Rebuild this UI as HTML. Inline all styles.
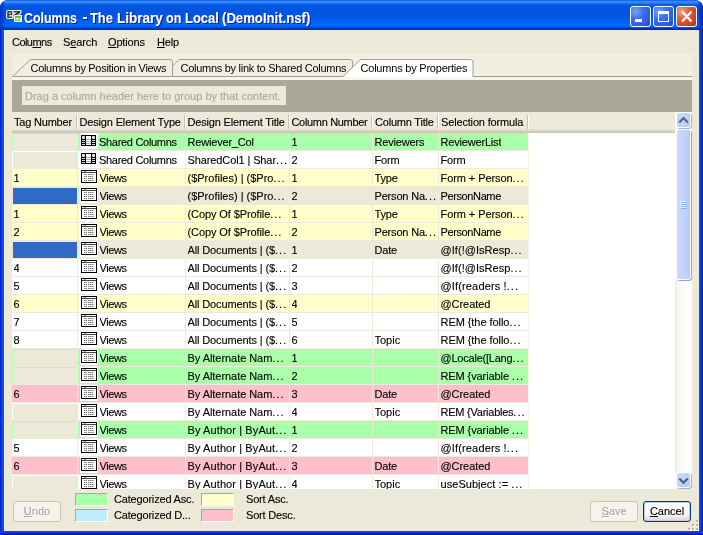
<!DOCTYPE html>
<html><head><meta charset="utf-8"><title>Columns</title>
<style>
*{box-sizing:border-box;margin:0;padding:0}
html,body{width:703px;height:535px;overflow:hidden;background:#fff}
body{font-family:"Liberation Sans",sans-serif;font-size:11px;color:#000;position:relative;-webkit-text-stroke:0.12px}
.abs{position:absolute}
#win{will-change:transform;position:absolute;left:0;top:0;width:703px;height:535px;border-radius:8px 8px 0 0;overflow:hidden;
 background:linear-gradient(to right,#0022C8 0,#0A3CE4 1.5px,#0C48EC 2.5px,#1256F0 4px,#1256F0 699px,#0A48E4 700px,#0632D0 701.5px,#001DA0 703px)}
#bbot{position:absolute;left:0;top:531px;width:703px;height:4px;background:linear-gradient(to bottom,#0C44EA 0,#0A3CE4 1.5px,#0428C0 2.5px,#00138C 4px)}
#tbar{position:absolute;left:0;top:0;width:703px;height:30px;border-radius:8px 8px 0 0;
 background:linear-gradient(to bottom,#0A4FD8 0,#2E82FA 1px,#3C8EFF 2px,#2A80FA 3px,#0E68F0 4px,#0358E6 5.5px,#0054E0 8px,#0054E2 16px,#005BEE 19px,#0065FC 22px,#0066FF 26px,#0058F0 27px,#0043D0 28px,#0030B8 29px,#002AA8 30px)}
#tbarL{position:absolute;left:0;top:0;width:6px;height:30px;border-radius:8px 0 0 0;background:linear-gradient(to right,#0034C8,rgba(0,52,200,0))}
#tbarR{position:absolute;left:697px;top:0;width:6px;height:30px;border-radius:0 8px 0 0;background:linear-gradient(to left,#0027A8,rgba(0,39,168,0))}
.tw{position:absolute;top:10px;transform-origin:0 0;font-weight:bold;font-size:14px;line-height:16px;color:#fff;text-shadow:1px 1px 0 #0A1883;white-space:nowrap}
#client{position:absolute;left:4px;top:30px;width:695px;height:501px;background:#ECE9D8}
.menu{position:absolute;top:36px;font-size:11px;white-space:nowrap;line-height:13px}
u{text-decoration:underline;text-underline-offset:1px;text-decoration-thickness:1px}
.tbtn{position:absolute;top:6px;width:21px;height:21px;border:1px solid #fff;border-radius:3px;background:radial-gradient(circle at 25% 25%,#7BA2FA 0%,#3F72F0 35%,#2B5BE0 75%,#2048C8 100%)}
#bclose{background:radial-gradient(circle at 25% 25%,#F2A98E 0%,#E2603C 35%,#D0411C 75%,#B02C0A 100%)}
#tabarea{position:absolute;left:12px;top:54px}
#grp{position:absolute;left:12px;top:80px;width:680px;height:32px;background:#ACA899}
#grpbox{position:absolute;left:22px;top:86px;width:264px;height:19px;background:#ECE9D8;color:#ACA899;font-size:11px;line-height:21px;padding-left:3px;white-space:nowrap;overflow:hidden}
#hdr{position:absolute;left:12px;top:112px;width:663px;height:21px;background:linear-gradient(to bottom,#EBEADB 0,#EBEADB 17px,#E2DECD 18px,#D6D2C2 19px,#CBC7B8 20px,#CBC7B8 21px)}
.h{position:absolute;top:113px;height:18px;line-height:19px;font-size:11px;white-space:nowrap}
.hs{position:absolute;top:115px;width:2px;height:14px;border-left:1px solid #C5C2B2;border-right:1px solid #fff}
#grid{position:absolute;left:12px;top:133px;width:663px;height:356px;background:#fff;overflow:hidden}
.row{position:absolute;left:12px;width:516px;height:18px;border-bottom:1px solid #EDEADA}
.c{position:absolute;top:0;height:18px;line-height:18px;white-space:nowrap;overflow:hidden;font-size:11px;letter-spacing:-0.18px}
.c0{left:1.5px}.c1{left:87px;letter-spacing:-0.3px}.c2{left:175.5px}.c3{left:279.5px}.c4{left:362.5px}.c5{left:428.5px}
.el{letter-spacing:1px}
.tag{position:absolute;left:1px;top:1px;width:64px;height:16px}
.tag.e{background:#ECE9D8}
.tag.b{background:#316AC5}
.icw{position:absolute;left:68px;top:0px;width:18px;height:16px;background:#fff}
.ic{position:absolute;left:69px}
.vl{position:absolute;top:133px;width:1px;height:356px;background:#EDEADA}
#sb{position:absolute;left:675px;top:112px;width:17px;height:377px;background:linear-gradient(to right,#EFEDE4 0,#F6F5EF 3px,#FBFBF8 8px,#FFFFFF 14px)}
.sbtn{position:absolute;left:677px;width:13px;height:14px;border-radius:2px;background:linear-gradient(135deg,#CADAFD 0,#C2D3FC 50%,#B4C8F7 100%);box-shadow:0 0 0 1px #fff,-1px 0 0 1px #fff,1px 1px 0 1px #9DB4E6}
#thumb{position:absolute;left:677px;top:130px;width:13px;height:149px;border-radius:2px;background:linear-gradient(to right,#C9D8FC 0,#C3D3FC 50%,#B6C9F8 100%);box-shadow:0 0 0 1px #fff,-1px 0 0 1px #fff,1px 1px 0 1px #8DA6E2}
.btn{position:absolute;top:501px;height:21px;border:1px solid #C9C7BA;border-radius:3px;background:#F5F4EA;color:#ACA899;font-size:11px;text-align:center;line-height:19px;text-shadow:1px 1px 0 #fff}
.lg{position:absolute;width:33px;height:13px;border:1px solid;border-color:#ACA899 #fff #fff #ACA899}
.lt{position:absolute;font-size:11px;white-space:nowrap;line-height:13px;letter-spacing:-0.18px}
</style></head><body>
<svg width="0" height="0" style="position:absolute"><defs><symbol id="is" viewBox="0 0 15 11"><rect width="15" height="11" fill="#000"/><rect x="1" y="1" width="3" height="3" fill="#B4B4B4"/><rect x="11" y="1" width="3" height="3" fill="#B4B4B4"/><rect x="2" y="1" width="1" height="3" fill="#E4E4E4"/><rect x="12" y="1" width="1" height="3" fill="#E4E4E4"/><rect x="1" y="2" width="3" height="1" fill="#E4E4E4"/><rect x="11" y="2" width="3" height="1" fill="#E4E4E4"/><rect x="5" y="1" width="5" height="9" fill="#fff"/><rect x="5" y="4" width="5" height="1" fill="#B0B0B0"/><rect x="5" y="6" width="5" height="1" fill="#B0B0B0"/><rect x="5" y="8" width="5" height="1" fill="#B0B0B0"/><rect x="1" y="5" width="3" height="1" fill="#D8D8D8"/><rect x="1" y="7" width="3" height="1" fill="#D8D8D8"/><rect x="1" y="9" width="3" height="1" fill="#D8D8D8"/><rect x="11" y="5" width="3" height="1" fill="#D8D8D8"/><rect x="11" y="7" width="3" height="1" fill="#D8D8D8"/><rect x="11" y="9" width="3" height="1" fill="#D8D8D8"/></symbol><symbol id="iv" viewBox="0 0 16 13"><rect width="16" height="13" fill="#000"/><rect x="1" y="1" width="14" height="11" fill="#fff"/><rect x="1" y="2" width="14" height="1" fill="#444"/><rect x="3" y="1" width="2" height="1" fill="#999"/><g fill="#7A7A7A"><rect x="3" y="4" width="1" height="1"/><rect x="5" y="4" width="1" height="1"/><rect x="7" y="4" width="1" height="1"/><rect x="9" y="4" width="1" height="1"/><rect x="11" y="4" width="1" height="1"/><rect x="3" y="6" width="1" height="1"/><rect x="5" y="6" width="1" height="1"/><rect x="7" y="6" width="1" height="1"/><rect x="9" y="6" width="1" height="1"/><rect x="11" y="6" width="1" height="1"/><rect x="3" y="8" width="1" height="1"/><rect x="5" y="8" width="1" height="1"/><rect x="7" y="8" width="1" height="1"/><rect x="9" y="8" width="1" height="1"/><rect x="11" y="8" width="1" height="1"/><rect x="3" y="10" width="1" height="1"/><rect x="5" y="10" width="1" height="1"/><rect x="7" y="10" width="1" height="1"/><rect x="9" y="10" width="1" height="1"/><rect x="11" y="10" width="1" height="1"/></g><g fill="#B8B8B8"><rect x="4" y="4" width="1" height="1"/><rect x="8" y="4" width="1" height="1"/><rect x="10" y="4" width="1" height="1"/><rect x="12" y="4" width="1" height="1"/><rect x="4" y="6" width="1" height="1"/><rect x="8" y="6" width="1" height="1"/><rect x="10" y="6" width="1" height="1"/><rect x="4" y="8" width="1" height="1"/><rect x="8" y="8" width="1" height="1"/><rect x="10" y="8" width="1" height="1"/><rect x="12" y="8" width="1" height="1"/><rect x="4" y="10" width="1" height="1"/><rect x="8" y="10" width="1" height="1"/><rect x="10" y="10" width="1" height="1"/><rect x="12" y="10" width="1" height="1"/></g></symbol></defs></svg>
<div id="win">
<div id="tbar"></div><div id="tbarL"></div><div id="tbarR"></div>
<svg class="abs" style="left:5px;top:9px" width="18" height="14" viewBox="0 0 18 14">
<g stroke="#fff" stroke-width="2" stroke-linejoin="round" fill="#3E3E3E" paint-order="stroke"><path fill-rule="evenodd" d="M2.2 2.8Q2.2 2 3 2H6.7Q7.5 2 7.5 2.8V6.2H3.9V7.4H7.5V9H3Q2.2 9 2.2 8.2ZM3.9 3.5V4.8H5.8V3.5Z"/><path d="M8.5 2H15.5V3.6L11 7.5H8.3V6.1L12.1 3.6H8.5Z"/></g>
<rect x="9.5" y="6.5" width="7" height="6" fill="#6AB43E" stroke="#fff"/>
<path d="M11 8.5v3M12.5 8.5v3M11 10h1.5M14 8.5v3M15.5 8.5v3M14 10h1.5" stroke="#fff" stroke-width=".8" fill="none"/>
</svg>
<div class="tw" style="left:24.2px;transform:scaleX(0.885)">Columns</div><div class="tw" style="left:90.1px;transform:scaleX(0.917)">The</div><div class="tw" style="left:117px;transform:scaleX(0.967)">Library</div><div class="tw" style="left:166.1px;transform:scaleX(0.894)">on</div><div class="tw" style="left:184.5px;transform:scaleX(0.925)">Local</div><div class="tw" style="left:222px;transform:scaleX(0.939)">(DemoInit.nsf)</div><div class="abs" style="left:83px;top:17px;width:4px;height:2px;background:#fff;box-shadow:1px 1px 0 #0A1883"></div>
<div class="tbtn" style="left:630px"><div class="abs" style="left:4px;top:12px;width:7px;height:3px;background:#fff"></div></div>
<div class="tbtn" style="left:653px"><div class="abs" style="left:4px;top:4px;width:11px;height:11px;border:1px solid #fff;border-top-width:3px"></div></div>
<div class="tbtn" id="bclose" style="left:676px"><svg class="abs" style="left:0;top:0" width="19" height="19"><path d="M5 4.5L14.5 14.5M14.5 4.5L5 14.5" stroke="#fff" stroke-width="2.2"/></svg></div>
<div id="client"></div><div class="abs" style="left:4px;top:30px;width:1px;height:501px;background:#F6F1DF"></div>
<div class="menu" style="left:12px;letter-spacing:-0.55px">Colu<u>m</u>ns</div>
<div class="menu" style="left:63px;letter-spacing:-0.1px">S<u>e</u>arch</div>
<div class="menu" style="left:108px;letter-spacing:-0.15px"><u>O</u>ptions</div>
<div class="menu" style="left:157px;letter-spacing:-0.2px"><u>H</u>elp</div>
<svg id="tabarea" width="680" height="26" viewBox="0 0 680 26">
<rect x="0" y="0" width="680" height="26" fill="#F1EFE2"/>
<rect x="0" y="23" width="680" height="3" fill="#F7F6EE"/>
<path d="M0.5 22.5L18.5 5.5H158Q160.5 5.5 160.5 8V22.5" fill="#F1EFE2" stroke="#A19E8E"/>
<path d="M160.5 12L167 5.5H338Q340.5 5.5 340.5 8V13" fill="none" stroke="#A19E8E"/>
<path d="M331 23L348.5 5.5H458.5Q461 5.5 461 8V23Z" fill="#fff" stroke="none"/>
<path d="M331 22.5L348.5 5.5H458.5Q461 5.5 461 8V22.5" fill="none" stroke="#A19E8E"/>
<path d="M0 22.5H331M461 22.5H680" stroke="#A19E8E"/>
<g font-family="Liberation Sans" font-size="11" fill="#000">
<text x="18.5" y="17.5" textLength="136" lengthAdjust="spacing">Columns by Position in Views</text>
<text x="168.5" y="17.5" textLength="166" lengthAdjust="spacing">Columns by link to Shared Columns</text>
<text x="348.5" y="17.5" textLength="107" lengthAdjust="spacing">Columns by Properties</text>
</g>
</svg>
<div id="grp"></div>
<div id="grpbox">Drag a column header here to group by that content.</div>
<div id="hdr"></div>
<div class="h" style="left:14px;letter-spacing:-0.2px">Tag Number</div>
<div class="h" style="left:79.5px;letter-spacing:-0.16px">Design Element Type</div>
<div class="h" style="left:187.5px;letter-spacing:-0.18px">Design Element Title</div>
<div class="h" style="left:291.5px;letter-spacing:-0.33px">Column Number</div>
<div class="h" style="left:375px;letter-spacing:-0.2px">Column Title</div>
<div class="h" style="left:441px;letter-spacing:-0.16px">Selection formula</div>
<div class="hs" style="left:76px"></div><div class="hs" style="left:184px"></div><div class="hs" style="left:288px"></div><div class="hs" style="left:371px"></div><div class="hs" style="left:437px"></div><div class="hs" style="left:527px"></div>
<div id="grid"></div>
<div class="abs" style="left:0;top:133px;width:703px;height:356px;overflow:hidden"><div class="abs" style="left:0;top:-133px">
<div class="row" style="top:133px;background:#AAFFAA">
<div class="tag e"></div>
<div class="icw"></div><svg class="ic" style="top:2px" width="15" height="11" shape-rendering="crispEdges"><use href="#is"/></svg>
<div class="c c1">Shared Columns</div>
<div class="c c2">Rewiever_Col</div><div class="c c3">1</div><div class="c c4">Reviewers</div><div class="c c5">ReviewerList</div>
</div>
<div class="row" style="top:151px;background:#FFFFFF">
<div class="tag e"></div>
<div class="icw"></div><svg class="ic" style="top:2px" width="15" height="11" shape-rendering="crispEdges"><use href="#is"/></svg>
<div class="c c1">Shared Columns</div>
<div class="c c2" style="letter-spacing:-0.11px">SharedCol1 | Shar<span class="el">...</span></div><div class="c c3">2</div><div class="c c4">Form</div><div class="c c5">Form</div>
</div>
<div class="row" style="top:169px;background:#FFFFCC">
<div class="c c0">1</div>
<div class="icw"></div><svg class="ic" style="top:1px" width="16" height="13" shape-rendering="crispEdges"><use href="#iv"/></svg>
<div class="c c1" style="left:87.5px;letter-spacing:-0.4px">Views</div>
<div class="c c2" style="letter-spacing:0.0px">($Profiles) | ($Pro<span class="el">...</span></div><div class="c c3">1</div><div class="c c4">Type</div><div class="c c5" style="letter-spacing:-0.08px">Form + Person<span class="el">...</span></div>
</div>
<div class="row" style="top:187px;background:#ECE9D8">
<div class="tag b"></div>
<div class="icw"></div><svg class="ic" style="top:1px" width="16" height="13" shape-rendering="crispEdges"><use href="#iv"/></svg>
<div class="c c1" style="left:87.5px;letter-spacing:-0.4px">Views</div>
<div class="c c2" style="letter-spacing:0.0px">($Profiles) | ($Pro<span class="el">...</span></div><div class="c c3">2</div><div class="c c4">Person Na<span class="el">...</span></div><div class="c c5" style="letter-spacing:-0.38px">PersonName</div>
</div>
<div class="row" style="top:205px;background:#FFFFCC">
<div class="c c0">1</div>
<div class="icw"></div><svg class="ic" style="top:1px" width="16" height="13" shape-rendering="crispEdges"><use href="#iv"/></svg>
<div class="c c1" style="left:87.5px;letter-spacing:-0.4px">Views</div>
<div class="c c2" style="letter-spacing:-0.1px">(Copy Of $Profile<span class="el">...</span></div><div class="c c3">1</div><div class="c c4">Type</div><div class="c c5" style="letter-spacing:-0.08px">Form + Person<span class="el">...</span></div>
</div>
<div class="row" style="top:223px;background:#FFFFCC">
<div class="c c0">2</div>
<div class="icw"></div><svg class="ic" style="top:1px" width="16" height="13" shape-rendering="crispEdges"><use href="#iv"/></svg>
<div class="c c1" style="left:87.5px;letter-spacing:-0.4px">Views</div>
<div class="c c2" style="letter-spacing:-0.1px">(Copy Of $Profile<span class="el">...</span></div><div class="c c3">2</div><div class="c c4">Person Na<span class="el">...</span></div><div class="c c5" style="letter-spacing:-0.38px">PersonName</div>
</div>
<div class="row" style="top:241px;background:#ECE9D8">
<div class="tag b"></div>
<div class="icw"></div><svg class="ic" style="top:1px" width="16" height="13" shape-rendering="crispEdges"><use href="#iv"/></svg>
<div class="c c1" style="left:87.5px;letter-spacing:-0.4px">Views</div>
<div class="c c2" style="letter-spacing:-0.12px">All Documents | ($<span class="el">...</span></div><div class="c c3">1</div><div class="c c4">Date</div><div class="c c5" style="letter-spacing:0.05px">@If(!@IsResp<span class="el">...</span></div>
</div>
<div class="row" style="top:259px;background:#FFFFFF">
<div class="c c0">4</div>
<div class="icw"></div><svg class="ic" style="top:1px" width="16" height="13" shape-rendering="crispEdges"><use href="#iv"/></svg>
<div class="c c1" style="left:87.5px;letter-spacing:-0.4px">Views</div>
<div class="c c2" style="letter-spacing:-0.12px">All Documents | ($<span class="el">...</span></div><div class="c c3">2</div><div class="c c4"></div><div class="c c5" style="letter-spacing:0.05px">@If(!@IsResp<span class="el">...</span></div>
</div>
<div class="row" style="top:277px;background:#FFFFFF">
<div class="c c0">5</div>
<div class="icw"></div><svg class="ic" style="top:1px" width="16" height="13" shape-rendering="crispEdges"><use href="#iv"/></svg>
<div class="c c1" style="left:87.5px;letter-spacing:-0.4px">Views</div>
<div class="c c2" style="letter-spacing:-0.12px">All Documents | ($<span class="el">...</span></div><div class="c c3">3</div><div class="c c4"></div><div class="c c5" style="letter-spacing:0.15px">@If(readers !<span class="el">...</span></div>
</div>
<div class="row" style="top:295px;background:#FFFFCC">
<div class="c c0">6</div>
<div class="icw"></div><svg class="ic" style="top:1px" width="16" height="13" shape-rendering="crispEdges"><use href="#iv"/></svg>
<div class="c c1" style="left:87.5px;letter-spacing:-0.4px">Views</div>
<div class="c c2" style="letter-spacing:-0.12px">All Documents | ($<span class="el">...</span></div><div class="c c3">4</div><div class="c c4"></div><div class="c c5" style="letter-spacing:-0.05px">@Created</div>
</div>
<div class="row" style="top:313px;background:#FFFFFF">
<div class="c c0">7</div>
<div class="icw"></div><svg class="ic" style="top:1px" width="16" height="13" shape-rendering="crispEdges"><use href="#iv"/></svg>
<div class="c c1" style="left:87.5px;letter-spacing:-0.4px">Views</div>
<div class="c c2" style="letter-spacing:-0.12px">All Documents | ($<span class="el">...</span></div><div class="c c3">5</div><div class="c c4"></div><div class="c c5" style="letter-spacing:-0.06px">REM {the follo<span class="el">...</span></div>
</div>
<div class="row" style="top:331px;background:#FFFFFF">
<div class="c c0">8</div>
<div class="icw"></div><svg class="ic" style="top:1px" width="16" height="13" shape-rendering="crispEdges"><use href="#iv"/></svg>
<div class="c c1" style="left:87.5px;letter-spacing:-0.4px">Views</div>
<div class="c c2" style="letter-spacing:-0.12px">All Documents | ($<span class="el">...</span></div><div class="c c3">6</div><div class="c c4" style="letter-spacing:0.0px">Topic</div><div class="c c5" style="letter-spacing:-0.06px">REM {the follo<span class="el">...</span></div>
</div>
<div class="row" style="top:349px;background:#AAFFAA">
<div class="tag e"></div>
<div class="icw"></div><svg class="ic" style="top:1px" width="16" height="13" shape-rendering="crispEdges"><use href="#iv"/></svg>
<div class="c c1" style="left:87.5px;letter-spacing:-0.4px">Views</div>
<div class="c c2" style="letter-spacing:-0.05px">By Alternate Nam<span class="el">...</span></div><div class="c c3">1</div><div class="c c4"></div><div class="c c5" style="letter-spacing:-0.22px">@Locale([Lang<span class="el">...</span></div>
</div>
<div class="row" style="top:367px;background:#AAFFAA">
<div class="tag e"></div>
<div class="icw"></div><svg class="ic" style="top:1px" width="16" height="13" shape-rendering="crispEdges"><use href="#iv"/></svg>
<div class="c c1" style="left:87.5px;letter-spacing:-0.4px">Views</div>
<div class="c c2" style="letter-spacing:-0.05px">By Alternate Nam<span class="el">...</span></div><div class="c c3">2</div><div class="c c4"></div><div class="c c5" style="letter-spacing:-0.1px">REM {variable <span class="el">...</span></div>
</div>
<div class="row" style="top:385px;background:#FFC0CB">
<div class="c c0">6</div>
<div class="icw"></div><svg class="ic" style="top:1px" width="16" height="13" shape-rendering="crispEdges"><use href="#iv"/></svg>
<div class="c c1" style="left:87.5px;letter-spacing:-0.4px">Views</div>
<div class="c c2" style="letter-spacing:-0.05px">By Alternate Nam<span class="el">...</span></div><div class="c c3">3</div><div class="c c4">Date</div><div class="c c5" style="letter-spacing:-0.05px">@Created</div>
</div>
<div class="row" style="top:403px;background:#FFFFFF">
<div class="tag e"></div>
<div class="icw"></div><svg class="ic" style="top:1px" width="16" height="13" shape-rendering="crispEdges"><use href="#iv"/></svg>
<div class="c c1" style="left:87.5px;letter-spacing:-0.4px">Views</div>
<div class="c c2" style="letter-spacing:-0.05px">By Alternate Nam<span class="el">...</span></div><div class="c c3">4</div><div class="c c4" style="letter-spacing:0.0px">Topic</div><div class="c c5" style="letter-spacing:-0.24px">REM {Variables<span class="el">...</span></div>
</div>
<div class="row" style="top:421px;background:#AAFFAA">
<div class="tag e"></div>
<div class="icw"></div><svg class="ic" style="top:1px" width="16" height="13" shape-rendering="crispEdges"><use href="#iv"/></svg>
<div class="c c1" style="left:87.5px;letter-spacing:-0.4px">Views</div>
<div class="c c2" style="letter-spacing:0.1px">By Author | ByAut<span class="el">...</span></div><div class="c c3">1</div><div class="c c4"></div><div class="c c5" style="letter-spacing:-0.1px">REM {variable <span class="el">...</span></div>
</div>
<div class="row" style="top:439px;background:#FFFFFF">
<div class="c c0">5</div>
<div class="icw"></div><svg class="ic" style="top:1px" width="16" height="13" shape-rendering="crispEdges"><use href="#iv"/></svg>
<div class="c c1" style="left:87.5px;letter-spacing:-0.4px">Views</div>
<div class="c c2" style="letter-spacing:0.1px">By Author | ByAut<span class="el">...</span></div><div class="c c3">2</div><div class="c c4"></div><div class="c c5" style="letter-spacing:0.15px">@If(readers !<span class="el">...</span></div>
</div>
<div class="row" style="top:457px;background:#FFC0CB">
<div class="c c0">6</div>
<div class="icw"></div><svg class="ic" style="top:1px" width="16" height="13" shape-rendering="crispEdges"><use href="#iv"/></svg>
<div class="c c1" style="left:87.5px;letter-spacing:-0.4px">Views</div>
<div class="c c2" style="letter-spacing:0.1px">By Author | ByAut<span class="el">...</span></div><div class="c c3">3</div><div class="c c4">Date</div><div class="c c5" style="letter-spacing:-0.05px">@Created</div>
</div>
<div class="row" style="top:475px;background:#FFFFFF">
<div class="tag e"></div>
<div class="icw"></div><svg class="ic" style="top:1px" width="16" height="13" shape-rendering="crispEdges"><use href="#iv"/></svg>
<div class="c c1" style="left:87.5px;letter-spacing:-0.4px">Views</div>
<div class="c c2" style="letter-spacing:0.1px">By Author | ByAut<span class="el">...</span></div><div class="c c3">4</div><div class="c c4" style="letter-spacing:0.0px">Topic</div><div class="c c5" style="letter-spacing:0.05px">useSubject := <span class="el">...</span></div>
</div>
</div></div>
<div class="vl" style="left:77px"></div><div class="vl" style="left:185px"></div><div class="vl" style="left:289px"></div><div class="vl" style="left:372px"></div><div class="vl" style="left:438px"></div><div class="vl" style="left:528px;background:#F3F2EA"></div>
<div id="sb"></div>
<div class="sbtn" style="top:113px"><svg class="abs" style="left:0;top:0" width="13" height="14"><path d="M2.2 9.4L6.5 5.1L10.8 9.4" fill="none" stroke="#4D6185" stroke-width="2.1"/></svg></div>
<div id="thumb"><svg class="abs" style="left:3px;top:71px" width="8" height="8" shape-rendering="crispEdges"><path d="M0 0.5h6M0 2.5h6M0 4.5h6M0 6.5h6" stroke="#EEF4FE"/><path d="M1 1.5h6M1 3.5h6M1 5.5h6M1 7.5h6" stroke="#8CB0F8"/></svg></div>
<div class="sbtn" style="top:473px"><svg class="abs" style="left:0;top:0" width="13" height="14"><path d="M2.2 5.4L6.5 9.7L10.8 5.4" fill="none" stroke="#4D6185" stroke-width="2.1"/></svg></div>
<div class="btn" style="left:13px;width:48px"><u>U</u>ndo</div>
<div class="lg" style="left:75px;top:493px;background:#AAFFAA"></div><div class="lt" style="left:114px;top:493px">Categorized Asc.</div>
<div class="lg" style="left:201px;top:493px;background:#FFFFCC"></div><div class="lt" style="left:246px;top:493px">Sort Asc.</div>
<div class="lg" style="left:75px;top:509px;background:#BFEFFF"></div><div class="lt" style="left:114px;top:509px">Categorized D...</div>
<div class="lg" style="left:201px;top:509px;background:#FFC0CB"></div><div class="lt" style="left:246px;top:509px">Sort Desc.</div>
<div class="btn" style="left:590px;width:48px"><u>S</u>ave</div>
<div class="btn" style="left:643px;width:48px;border-color:#003C74;color:#000;text-shadow:none;background:linear-gradient(to bottom,#fff 0,#F6F5EE 70%,#DAD6C8 100%);box-shadow:inset 0 0 0 1px #B5C9F0"><u>C</u>ancel</div>
<svg class="abs" style="left:687px;top:519px" width="13" height="13"><g fill="#B8B4A2"><rect x="9" y="1" width="2" height="2"/><rect x="5" y="5" width="2" height="2"/><rect x="9" y="5" width="2" height="2"/><rect x="1" y="9" width="2" height="2"/><rect x="5" y="9" width="2" height="2"/><rect x="9" y="9" width="2" height="2"/></g><g fill="#fff"><rect x="10" y="2" width="2" height="2"/><rect x="6" y="6" width="2" height="2"/><rect x="10" y="6" width="2" height="2"/><rect x="2" y="10" width="2" height="2"/><rect x="6" y="10" width="2" height="2"/><rect x="10" y="10" width="2" height="2"/></g><g fill="#B8B4A2"><rect x="9" y="1" width="2" height="2"/><rect x="5" y="5" width="2" height="2"/><rect x="9" y="5" width="2" height="2"/><rect x="1" y="9" width="2" height="2"/><rect x="5" y="9" width="2" height="2"/><rect x="9" y="9" width="2" height="2"/></g></svg>
<div id="bbot"></div>
</div>
</body></html>
